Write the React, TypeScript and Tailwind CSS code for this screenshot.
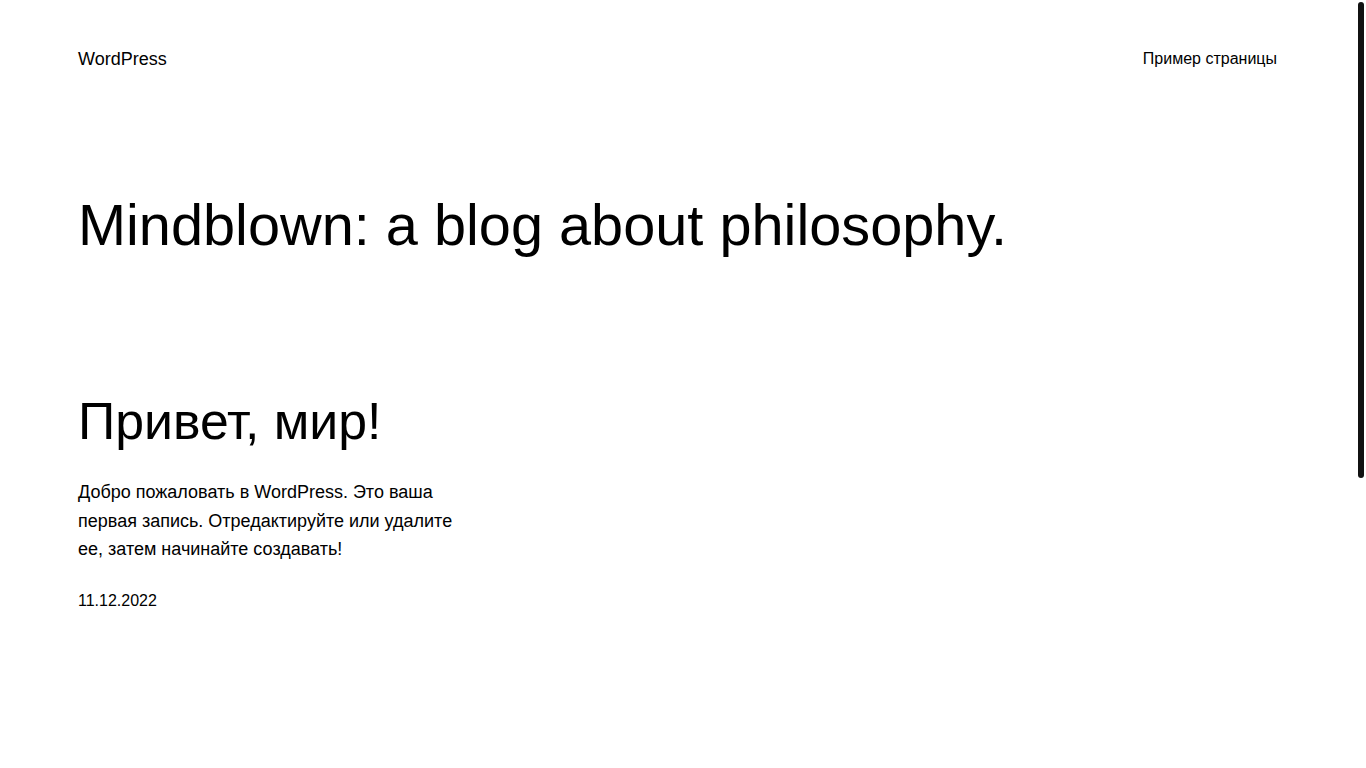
import React from 'react';

const font = { fontFamily: '"Liberation Sans", Arial, sans-serif' };

const App = (): React.ReactElement => {
    return (
        <div className="relative min-h-screen bg-white text-black overflow-hidden" style={font}>
            {/* Header */}
            <header className="flex items-center justify-between pt-[45px] pl-[78px] pr-[89px]">
                <a className="text-[18px] leading-[28px]">WordPress</a>
                <nav className="text-[16px] leading-[28px]">Пример страницы</nav>
            </header>

            {/* Blog title */}
            <h1 className="mt-[117px] pl-[78px] text-[57.7px] leading-[70px] font-normal">
                Mindblown: a blog about philosophy.
            </h1>

            {/* Posts */}
            <div className="mt-[130px] pl-[78px] grid grid-cols-3 gap-6 pr-[89px]">
                <article className="w-[390px]">
                    <h2 className="text-[51.8px] leading-[62px] font-normal">Привет, мир!</h2>
                    <p className="mt-[26px] text-[18px] leading-[28.5px]">
                        Добро пожаловать в WordPress. Это ваша первая запись. Отредактируйте или удалите ее, затем начинайте создавать!
                    </p>
                    <div className="mt-[25px] text-[16px] leading-[24px]">11.12.2022</div>
                </article>
            </div>

            {/* Overlay scrollbar thumb */}
            <div className="absolute right-[2px] top-[2px] w-[6px] h-[476px] rounded-full bg-[#111111]" />
        </div>
    );
};

export default App;
